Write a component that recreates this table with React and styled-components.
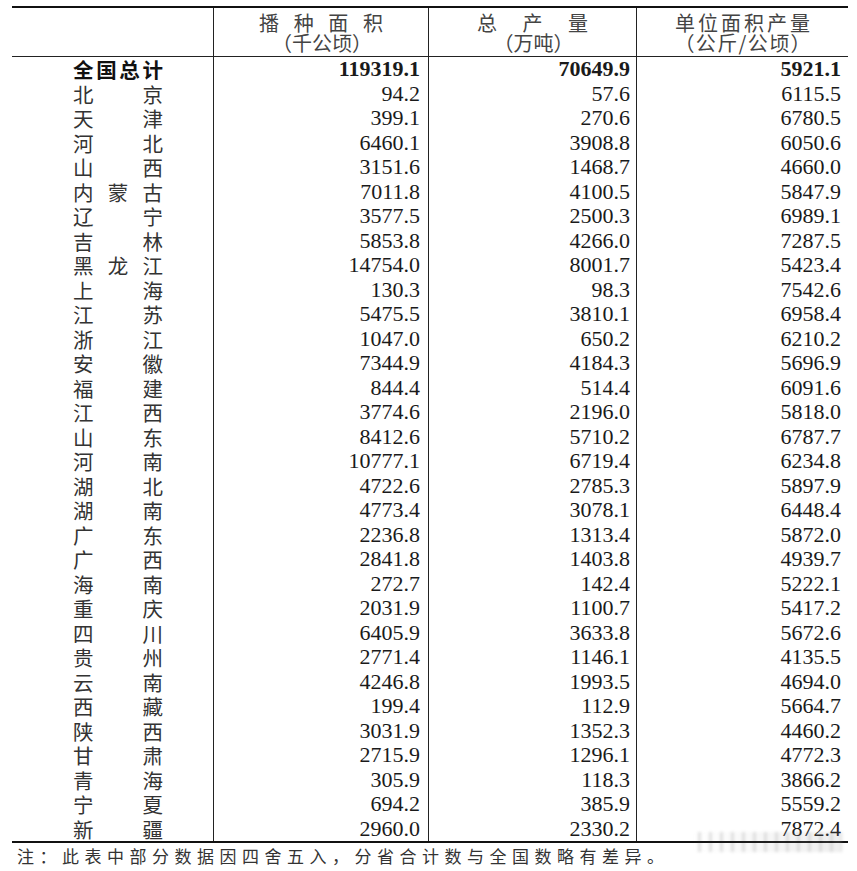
import React from "react";
import styled, { createGlobalStyle } from "styled-components";

const GlobalStyle = createGlobalStyle`
  html, body { margin: 0; padding: 0; background: #ffffff; }
  body { font-family: "Liberation Serif", "Noto Sans CJK SC", serif; color: #1a1a1a; }
`;

const CJK = `"Noto Sans CJK SC", sans-serif`;
const NUM = `"Liberation Serif", "Times New Roman", serif`;

const Page = styled.div`
  position: relative;
  width: 857px;
  height: 871px;
  padding-top: 6px;
  box-sizing: border-box;
`;

const Table = styled.div`
  margin-left: 12px;
  width: 836px;
  border-top: 2px solid #111;
  border-bottom: 2px solid #111;
`;

const Row = styled.div`
  display: grid;
  grid-template-columns: 201px 215px 208px 212px;
  height: ${(p) => p.$h}px;
  border-bottom: ${(p) => (p.$divider ? "1px solid #222" : "none")};
`;

const HeadCell = styled.div`
  display: flex;
  flex-direction: column;
  align-items: center;
  justify-content: center;
  border-left: ${(p) => (p.$first ? "none" : "1px solid #222")};
  font-family: ${CJK};
  font-size: 20px;
  line-height: 20px;
  color: #444;
  padding-top: 1px;
`;

const Spread = styled.div`
  display: flex;
  justify-content: space-between;
  width: ${(p) => p.$w}px;
`;

const NameCell = styled.div`
  display: flex;
  align-items: center;
  padding-left: 61px;
  font-family: ${CJK};
  font-size: 20.5px;
  line-height: 1;
  color: ${(p) => (p.$bold ? "#111" : "#333")};
  font-weight: ${(p) => (p.$bold ? 700 : 400)};
`;

const NumCell = styled.div`
  display: flex;
  align-items: center;
  justify-content: flex-end;
  padding-right: ${(p) => p.$pr}px;
  border-left: 1px solid #222;
  font-family: ${NUM};
  font-size: 22px;
  line-height: 1;
  color: #1a1a1a;
  font-weight: ${(p) => (p.$bold ? 700 : 400)};
`;

const Note = styled.div`
  margin: 3px 0 0 17px;
  font-family: ${CJK};
  font-size: 17px;
  line-height: 20px;
  letter-spacing: 5.5px;
  color: #333;
  white-space: pre;
`;

const Watermark = styled.div`
  position: absolute;
  left: 690px;
  top: 832px;
  width: 152px;
  height: 20px;
  opacity: 0.28;
  background:
    repeating-linear-gradient(90deg, transparent 0 8px, rgba(60,60,60,0.55) 8px 11px),
    linear-gradient(90deg, rgba(255,255,255,0) 0%, rgba(170,170,170,0.7) 100%);
  filter: blur(1.5px);
  pointer-events: none;
`;

const data = [
  ["北京", "94.2", "57.6", "6115.5"],
  ["天津", "399.1", "270.6", "6780.5"],
  ["河北", "6460.1", "3908.8", "6050.6"],
  ["山西", "3151.6", "1468.7", "4660.0"],
  ["内蒙古", "7011.8", "4100.5", "5847.9"],
  ["辽宁", "3577.5", "2500.3", "6989.1"],
  ["吉林", "5853.8", "4266.0", "7287.5"],
  ["黑龙江", "14754.0", "8001.7", "5423.4"],
  ["上海", "130.3", "98.3", "7542.6"],
  ["江苏", "5475.5", "3810.1", "6958.4"],
  ["浙江", "1047.0", "650.2", "6210.2"],
  ["安徽", "7344.9", "4184.3", "5696.9"],
  ["福建", "844.4", "514.4", "6091.6"],
  ["江西", "3774.6", "2196.0", "5818.0"],
  ["山东", "8412.6", "5710.2", "6787.7"],
  ["河南", "10777.1", "6719.4", "6234.8"],
  ["湖北", "4722.6", "2785.3", "5897.9"],
  ["湖南", "4773.4", "3078.1", "6448.4"],
  ["广东", "2236.8", "1313.4", "5872.0"],
  ["广西", "2841.8", "1403.8", "4939.7"],
  ["海南", "272.7", "142.4", "5222.1"],
  ["重庆", "2031.9", "1100.7", "5417.2"],
  ["四川", "6405.9", "3633.8", "5672.6"],
  ["贵州", "2771.4", "1146.1", "4135.5"],
  ["云南", "4246.8", "1993.5", "4694.0"],
  ["西藏", "199.4", "112.9", "5664.7"],
  ["陕西", "3031.9", "1352.3", "4460.2"],
  ["甘肃", "2715.9", "1296.1", "4772.3"],
  ["青海", "305.9", "118.3", "3866.2"],
  ["宁夏", "694.2", "385.9", "5559.2"],
  ["新疆", "2960.0", "2330.2", "7872.4"],
];

function Chars({ text, w }) {
  return (
    <Spread $w={w}>
      {Array.from(text).map((c, i) => (
        <span key={i}>{c}</span>
      ))}
    </Spread>
  );
}

function DataRow({ name, a, b, c, bold }) {
  return (
    <Row $h={24.5}>
      <NameCell $bold={bold}>
        <Chars text={name} w={90} />
      </NameCell>
      <NumCell $pr={8} $bold={bold}>{a}</NumCell>
      <NumCell $pr={6} $bold={bold}>{b}</NumCell>
      <NumCell $pr={7} $bold={bold}>{c}</NumCell>
    </Row>
  );
}

export default function App() {
  return (
    <Page>
      <GlobalStyle />
      <Table>
        <Row $h={48} $divider>
          <HeadCell $first />
          <HeadCell>
            <Chars text="播种面积" w={124} />
            <Chars text="（千公顷）" w={98} />
          </HeadCell>
          <HeadCell>
            <Chars text="总产量" w={111} />
            <Chars text="（万吨）" w={78} />
          </HeadCell>
          <HeadCell>
            <Chars text="单位面积产量" w={135} />
            <Chars text="（公斤/公顷）" w={136} />
          </HeadCell>
        </Row>
        <DataRow name="全国总计" a="119319.1" b="70649.9" c="5921.1" bold />
        {data.map(([n, a, b, c]) => (
          <DataRow key={n} name={n} a={a} b={b} c={c} />
        ))}
      </Table>
      <Note>{"注：此表中部分数据因四舍五入，分省合计数与全国数略有差异。"}</Note>
      <Watermark />
    </Page>
  );
}
